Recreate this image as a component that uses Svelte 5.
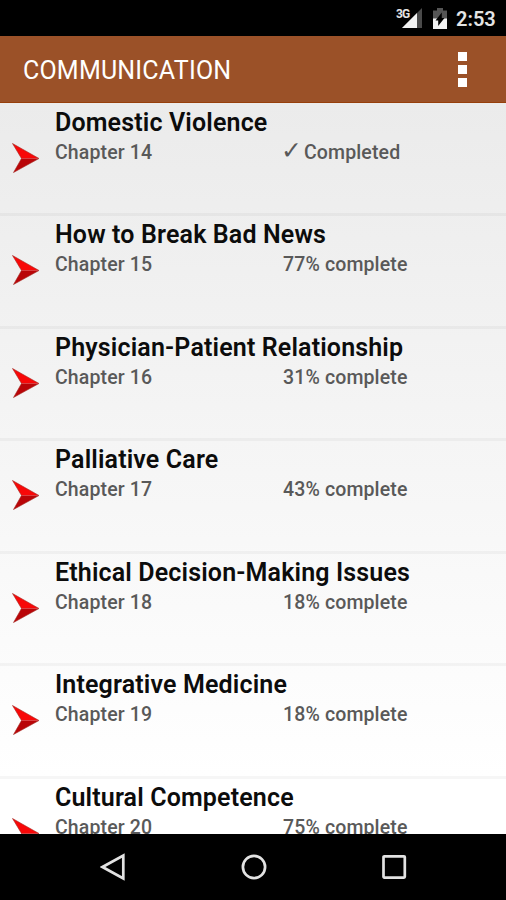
<script lang="ts">
  interface Chapter {
    title: string;
    number: number;
    percent: number;
  }

  const chapters: Chapter[] = [
    { title: "Domestic Violence", number: 14, percent: 100 },
    { title: "How to Break Bad News", number: 15, percent: 77 },
    { title: "Physician-Patient Relationship", number: 16, percent: 31 },
    { title: "Palliative Care", number: 17, percent: 43 },
    { title: "Ethical Decision-Making Issues", number: 18, percent: 18 },
    { title: "Integrative Medicine", number: 19, percent: 18 },
    { title: "Cultural Competence", number: 20, percent: 75 },
  ];
</script>

<div class="screen">
  <div class="status-bar">
    <span class="network">3G</span>
    <svg class="signal" width="20" height="20" viewBox="0 0 20 20">
      <path d="M20 0V20H0Z" fill="#4a4a4a" />
      <path d="M15 5V20H0Z" fill="#f2f2f2" />
    </svg>
    <svg class="battery" width="14" height="21" viewBox="0 0 14 21">
      <path d="M4 0h6v2.500h4V11H0V2.500h4Z" fill="#555" />
      <path d="M0 10.500h14V21H0Z" fill="#f2f2f2" />
      <path d="M8.800 4.500v5.500H11.500L5.200 18v-5.500H2.500Z" fill="#000" />
    </svg>
    <span class="clock">2:53</span>
  </div>

  <header>
    <h1>COMMUNICATION</h1>
    <button class="menu" aria-label="More options">
      <i></i><i></i><i></i>
    </button>
  </header>

  <main>
    {#each chapters as chapter (chapter.number)}
      <div class="row">
        <svg class="arrow" width="28" height="31" viewBox="0 0 28 31">
          <path d="M0.500 0.500L27 15.500L9.500 15.500Z" fill="#f80808" />
          <path d="M27 15.500L1.500 29.500L9.500 15.500Z" fill="#b90508" />
          <path d="M0.500 0.500L27 15.500L1.500 29.500L9.500 15.500Z" fill="none" stroke="#a32a24" stroke-width="0.600" />
        </svg>
        <div class="info">
          <h2>{chapter.title}</h2>
          <div class="details">
            <span class="number">Chapter {chapter.number}</span>
            {#if chapter.percent === 100}
              <span><span class="check">✓</span>Completed</span>
            {:else}
              <span>{chapter.percent}% complete</span>
            {/if}
          </div>
        </div>
      </div>
    {/each}
  </main>

  <nav>
    <svg width="26" height="28" viewBox="0 0 26 28">
      <path d="M23.300 2.500V25.500L2.500 14Z" />
    </svg>
    <svg width="26" height="28" viewBox="0 0 26 28">
      <circle cx="13" cy="14" r="11.100" />
    </svg>
    <svg width="26" height="28" viewBox="0 0 26 28">
      <rect x="2.500" y="3.300" width="21.300" height="21.300" rx="0.800" />
    </svg>
  </nav>
</div>

<style>
  .screen {
    display: flex;
    flex-direction: column;
    width: 506px;
    height: 900px;
    overflow: hidden;
    background: #000;
    font-family: Roboto, sans-serif;
  }

  .status-bar {
    display: flex;
    flex: none;
    align-items: flex-start;
    box-sizing: border-box;
    height: 36px;
    padding: 8px 0 0 396px;
    color: #e4e4e4;
  }

  .network {
    width: 6px;
    font-size: 12px;
    font-weight: 700;
    line-height: 12px;
    white-space: nowrap;
    letter-spacing: -0.8px;
  }

  .signal {
    flex: none;
  }

  .battery {
    flex: none;
    margin-left: 11px;
  }

  .clock {
    margin-left: 9px;
    font-size: 20px;
    font-weight: 600;
    line-height: 23px;
  }

  header {
    display: flex;
    flex: none;
    align-items: center;
    justify-content: space-between;
    box-sizing: border-box;
    height: 67px;
    padding: 0 39px 0 23px;
    background: #9b5128;
    border-bottom: 1px solid #963f0b;
  }

  h1 {
    margin: 4px 0 0;
    color: #fff;
    font-size: 25px;
    font-weight: 400;
    line-height: 30px;
    letter-spacing: 0.2px;
  }

  .menu {
    display: flex;
    flex-direction: column;
    gap: 4px;
    padding: 0;
    border: 0;
    background: none;
  }

  .menu i {
    width: 9px;
    height: 9px;
    background: #fff;
  }

  main {
    flex: none;
    box-sizing: border-box;
    height: 731px;
    padding-top: 0.6px;
    overflow: hidden;
    background: linear-gradient(#ebebeb, #fff 92%);
  }

  .row {
    display: flex;
    box-sizing: border-box;
    height: 112.5px;
    padding-left: 12px;
    border-bottom: 3px solid rgba(0, 0, 0, 0.035);
  }

  .arrow {
    flex: none;
    margin: 39.4px 15px 0 0;
  }

  .info {
    flex: 1;
  }

  h2 {
    margin: 4px 0 0;
    color: #0c0c0c;
    font-size: 25px;
    font-weight: 600;
    line-height: 30px;
    letter-spacing: 0.15px;
    white-space: nowrap;
  }

  .details {
    display: flex;
    color: #595959;
    font-size: 19.5px;
    font-weight: 500;
    line-height: 24px;
    letter-spacing: 0.13px;
    margin-top: 3.3px;
    white-space: nowrap;
  }

  .number {
    width: 228px;
  }

  .check {
    display: inline-block;
    width: 21px;
    font-family: "DejaVu Sans", sans-serif;
    font-size: 25px;
    font-weight: 400;
    line-height: 20px;
    text-indent: -2px;
  }

  nav {
    display: flex;
    flex: none;
    align-items: center;
    justify-content: space-between;
    box-sizing: border-box;
    height: 66px;
    padding: 0 99px 0 100px;
  }

  nav svg {
    fill: none;
    stroke: #e2e2e2;
    stroke-width: 2.7;
  }
</style>
